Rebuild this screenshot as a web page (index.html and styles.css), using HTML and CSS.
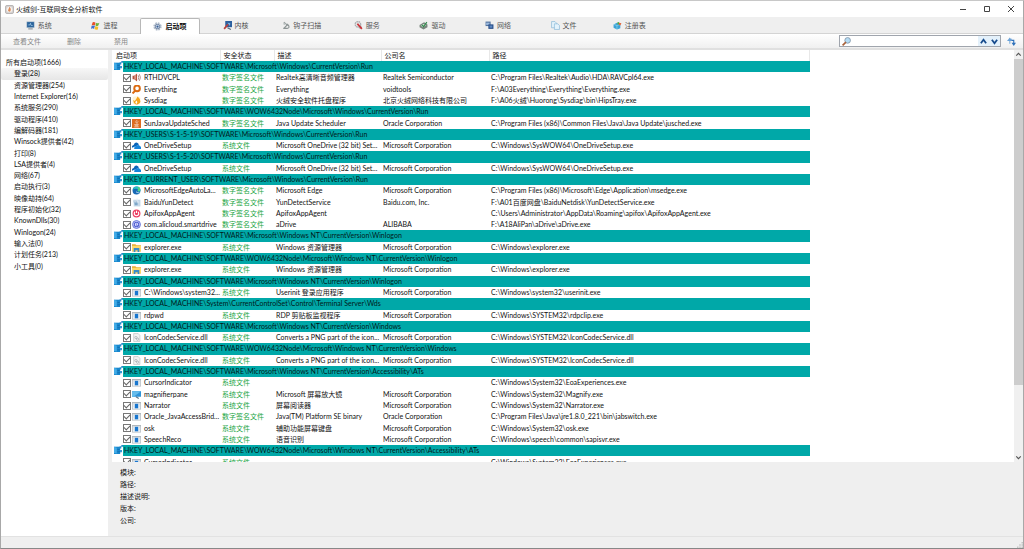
FILE: index.html
```html
<!DOCTYPE html>
<html lang="zh-CN">
<head>
    <meta charset="UTF-8">
    <meta name="viewport" content="width=device-width, initial-scale=1.0">
    <title>火绒剑-互联网安全分析软件</title>
    <link rel="stylesheet" href="styles.css">
</head>
<body>
    <svg class="sprite" aria-hidden="true">
        <symbol id="i-system" viewBox="0 0 16 16"><rect x="1" y="1" width="14" height="11" fill="#8fa9c0"/><rect x="2" y="2" width="12" height="9" fill="#2d659c"/><path d="M4 7h3l1-3 1 4h3" stroke="#bfe4ff" fill="none"/><path d="M4 14h8" stroke="#8b949c" stroke-width="2"/></symbol>
        <symbol id="i-process" viewBox="0 0 16 16"><path d="M3 2q3-1 5 1L7 8Q4 6 1 8z" fill="#e8502a"/><path d="M9 3q3 2 6 0l-2 5q-3 2-5 0z" fill="#6db33a"/><path d="M1 9q3-2 6 0l-2 5q-2-2-5 0z" fill="#3f6fd0"/><path d="M8 9q3 2 5 1l-1 5q-3 1-6-1z" fill="#f6bd27"/></symbol>
        <symbol id="i-gear" viewBox="0 0 16 16"><circle cx="8" cy="8" r="6" fill="none" stroke="#b4bfcd" stroke-width="3" stroke-dasharray="3 1.7"/><circle cx="8" cy="8" r="4" fill="#dfe9f5" stroke="#7d90ac" stroke-width="2"/><circle cx="8" cy="8" r="2" fill="#345c94"/></symbol>
        <symbol id="i-kernel" viewBox="0 0 16 16"><rect x="4" y="0" width="12" height="11" fill="#2b5f9e"/><path d="M8 3l5 1-1 5" fill="#7db1e0"/><path d="M2 14l7-8" stroke="#b8413b" stroke-width="3"/><path d="M8 12l6 3" stroke="#576779" stroke-width="2"/></symbol>
        <symbol id="i-hook" viewBox="0 0 16 16"><path d="M5 2l6 5-6 6M4 13h7q4 0 3-4l-3-4" fill="none" stroke="#8c9494" stroke-width="2"/><circle cx="6" cy="5" r="2" fill="#b9c0c0"/></symbol>
        <symbol id="i-service" viewBox="0 0 16 16"><circle cx="7" cy="6" r="5" fill="#e3e3e3" stroke="#a5a9ad" stroke-width="2" stroke-dasharray="3 1"/><circle cx="11" cy="11" r="3" fill="#bcbcbc"/><path d="M6 5l8 9" stroke="#cb3036" stroke-width="3"/></symbol>
        <symbol id="i-driver" viewBox="0 0 16 16"><path d="M1 7l8-5 6 4v5l-7 4-7-4z" fill="#77847c"/><path d="M3 8l6-3 4 2-6 4z" fill="#d8e2da"/><path d="M5 7l3 3 6-8" fill="none" stroke="#2e8a4a" stroke-width="2"/></symbol>
        <symbol id="i-network" viewBox="0 0 16 16"><rect x="1" y="1" width="9" height="8" fill="#54749f"/><rect x="2" y="3" width="6" height="4" fill="#9cbade"/><rect x="6" y="6" width="9" height="8" fill="#294f89"/><rect x="8" y="8" width="5" height="4" fill="#5d88c2"/></symbol>
        <symbol id="i-file" viewBox="0 0 16 16"><path d="M1 1h6l3 3v8H1z" fill="#e4f3fc" stroke="#72abd0"/><path d="M6 5h6l3 3v7H6z" fill="#e4f3fc" stroke="#72abd0"/></symbol>
        <symbol id="i-registry" viewBox="0 0 16 16"><path d="M1 6l6-3 6 3v7l-6 2-6-3z" fill="#3ca3d5"/><path d="M7 8v7M1 6l6 2 6-2" stroke="#a7e2f7" fill="none"/><path d="M8 2h3v4H8z" fill="#50a93f"/><path d="M11 3l4 1-2 4-3-2z" fill="#e5663b"/></symbol>
        <symbol id="i-group" viewBox="0 0 16 16"><path d="M0 3h11v13H0z" fill="#1787cd"/><path d="M0 3l5 2v10l-5-1z" fill="#43abe6"/><path d="M6 8h4M6 12h5" stroke="#0c5fa0"/><path d="M11 9h3v4h-3z" fill="#1787cd"/><path d="M10 2h3v4h-3zM13 0h3v3h-3z" fill="#258ac9"/></symbol>
        <symbol id="i-sound" viewBox="0 0 16 16"><path d="M1 5h3l5-4v14l-5-4H1z" fill="#b5523c"/><path d="M4 5l3-2v9l-3-2z" fill="#d9998a"/><path d="M11 4q2 4 0 8M13 2q4 6 0 12" fill="none" stroke="#a87d74" stroke-width="1.5"/></symbol>
        <symbol id="i-search" viewBox="0 0 16 16"><circle cx="9" cy="6" r="5" fill="none" stroke="#dc6b12" stroke-width="3.500"/><path d="M6 10l-5 5" stroke="#dc6b12" stroke-width="3.500"/></symbol>
        <symbol id="i-huorong" viewBox="0 0 16 16"><rect x="1" y="1" width="14" height="14" rx="3" fill="#fff3d8"/><path d="M10 1q5 4 5 9-2 5-8 5-5-3-5-8l3 2q3-4 5-8z" fill="#f7a51b"/><path d="M8 8q3 3 0 6-4-2 0-6z" fill="#fff"/></symbol>
        <symbol id="i-java" viewBox="0 0 16 16"><rect width="16" height="16" fill="#dd6c20"/><path d="M9 2q-4 3-1 6M11 4q-3 2-1 4M4 10h8M5 12h6M4 14h8" stroke="#fff" fill="none"/></symbol>
        <symbol id="i-onedrive" viewBox="0 0 16 16"><path d="M0 12q-1-4 3-5 2-5 6-4 3 1 3 4z" fill="#0a64b8"/><path d="M4 14q-1-5 5-6 3-2 5 1 3 1 2 5z" fill="#1685db"/></symbol>
        <symbol id="i-edge" viewBox="0 0 16 16"><circle cx="8" cy="8" r="7" fill="#1769b5"/><path d="M1 7q2-6 8-6 6 1 6 7-2 3-5 1 2-4-3-4-4 0-6 2z" fill="#2bc0c2"/><path d="M10 9q2 2 5-1 0-5-4-7 0 4-1 8z" fill="#55cf80"/><path d="M7 9q0 4 5 4l2-1q-1-1-5-1z" fill="#d8edfb"/></symbol>
        <symbol id="i-baidu" viewBox="0 0 16 16"><rect x="3" y="3" width="12" height="12" fill="#c5d8e8"/><path d="M3 2v6h4V5h3v8H5z" fill="#7ea7ca"/><path d="M9 1v6h3" stroke="#e5edf4" stroke-width="2" fill="none"/></symbol>
        <symbol id="i-apifox" viewBox="0 0 16 16"><circle cx="8" cy="8" r="7" fill="#ed3e60"/><path d="M5 5q-3 6 3 7 6-1 3-7M8 3v4" fill="none" stroke="#fff" stroke-width="2"/></symbol>
        <symbol id="i-drive" viewBox="0 0 16 16"><circle cx="8" cy="8" r="7" fill="#d8dbff" stroke="#5261d2" stroke-width="1.5"/><circle cx="8" cy="8" r="4" fill="none" stroke="#5261d2" stroke-width="2"/><path d="M8 6v4h4" stroke="#5261d2" fill="none"/></symbol>
        <symbol id="i-folder" viewBox="0 0 16 16"><path d="M0 2h6l2 2h8v11H0z" fill="#e7ad33"/><path d="M0 5h16v9H0z" fill="#ffd868"/><path d="M3 9h10v7h-3v-3H6v3H3z" fill="#3a8bc9"/></symbol>
        <symbol id="i-exe" viewBox="0 0 16 16"><rect y="2" width="16" height="13" fill="#a7adb2"/><rect x="1" y="4" width="14" height="10" fill="#edf2f6"/><rect x="5" y="5" width="6" height="8" fill="#1976ce"/><path d="M2 6h2M2 9h2M12 6h2M12 9h2" stroke="#c3cbd2"/></symbol>
        <symbol id="i-dll" viewBox="0 0 16 16"><path d="M3 1h8l3 3v11H3z" fill="#f3f3f3" stroke="#b5b5b5"/><circle cx="7" cy="8" r="2" fill="none" stroke="#929ba1"/><circle cx="10" cy="11" r="2" fill="none" stroke="#929ba1"/></symbol>
        <symbol id="i-magnify" viewBox="0 0 16 16"><path d="M0 2h16v10H0z" fill="#2d93d8"/><path d="M0 2h16L3 12H0z" fill="#66bceb"/><path d="M7 12l5 3" stroke="#5a7184" stroke-width="2"/></symbol>
        <symbol id="i-lens" viewBox="0 0 16 16"><circle cx="10" cy="6" r="5" fill="#b5dcf4" stroke="#8396a8" stroke-width="1.5"/><path d="M7 9l-6 6" stroke="#a7613a" stroke-width="3"/></symbol>
        <symbol id="i-refresh" viewBox="0 0 16 16"><path d="M5 12V4h4" fill="none" stroke="#7fb0dd" stroke-width="2"/><path d="M0 7l5-6 4 6z" fill="#6aa2d8"/><path d="M8 6h4v7" fill="none" stroke="#2f72bb" stroke-width="2"/><path d="M8 10h8l-4 6z" fill="#2f72bb"/></symbol>
        <symbol id="i-logo" viewBox="0 0 16 16"><rect x="1" y="1" width="14" height="14" rx="2" fill="#d8d5d4" stroke="#8d8787"/><circle cx="8" cy="8" r="5" fill="#f7f2ee"/><path d="M8 3q4 4 1 9-5-1-3-4z" fill="#dc8b58"/></symbol>
    </svg>

    <div class="window">
        <header class="titlebar">
            <svg class="logo"><use href="#i-logo"/></svg>
            <h1 class="title">火绒剑-互联网安全分析软件</h1>
            <div class="window-buttons">
                <button class="win-btn" aria-label="最小化"><svg viewBox="0 0 8 8"><path d="M1 4.500h6"/></svg></button>
                <button class="win-btn" aria-label="最大化"><svg viewBox="0 0 8 8"><path d="M1.500 1.500h5v5h-5z"/></svg></button>
                <button class="win-btn" aria-label="关闭"><svg viewBox="0 0 8 8"><path d="M1 1l6 6M7 1L1 7"/></svg></button>
            </div>
        </header>

        <nav class="tabs">
            <div class="tab-list">
                <button class="tab"><svg class="icon"><use href="#i-system"/></svg>系统</button>
                <button class="tab"><svg class="icon"><use href="#i-process"/></svg>进程</button>
                <button class="tab active"><svg class="icon"><use href="#i-gear"/></svg>启动项</button>
                <button class="tab"><svg class="icon"><use href="#i-kernel"/></svg>内核</button>
                <button class="tab"><svg class="icon"><use href="#i-hook"/></svg>钩子扫描</button>
                <button class="tab"><svg class="icon"><use href="#i-service"/></svg>服务</button>
                <button class="tab"><svg class="icon"><use href="#i-driver"/></svg>驱动</button>
                <button class="tab"><svg class="icon"><use href="#i-network"/></svg>网络</button>
                <button class="tab"><svg class="icon"><use href="#i-file"/></svg>文件</button>
                <button class="tab"><svg class="icon"><use href="#i-registry"/></svg>注册表</button>
            </div>
        </nav>

        <div class="toolbar">
            <button class="tool">查看文件</button>
            <button class="tool">删除</button>
            <button class="tool">禁用</button>
            <div class="search">
                <svg class="icon"><use href="#i-lens"/></svg>
                <input type="text" class="search-input" aria-label="搜索">
                <button class="search-btn" aria-label="上一个"><svg viewBox="0 0 8 8"><path d="M1 6l3-4 3 4"/></svg></button>
                <button class="search-btn" aria-label="下一个"><svg viewBox="0 0 8 8"><path d="M1 2l3 4 3-4"/></svg></button>
            </div>
            <button class="refresh" aria-label="刷新"><svg class="icon"><use href="#i-refresh"/></svg></button>
        </div>

        <div class="content">
            <aside class="sidebar">
                <ul class="tree" id="tree"></ul>
            </aside>
            <main class="main">
                <div class="list">
                    <div class="list-view">
                        <table class="items">
                            <colgroup>
                                <col class="col-name"><col class="col-state"><col class="col-desc"><col class="col-company"><col class="col-path">
                            </colgroup>
                            <thead>
                                <tr><th>启动项</th><th>安全状态</th><th>描述</th><th>公司名</th><th>路径</th></tr>
                            </thead>
                            <tbody id="rows"></tbody>
                        </table>
                    </div>
                    <div class="scrollbar">
                        <button class="scroll-btn" aria-label="向上"><svg viewBox="0 0 8 8"><path d="M2 5l2-2 2 2"/></svg></button>
                        <div class="thumb"></div>
                        <button class="scroll-btn" aria-label="向下"><svg viewBox="0 0 8 8"><path d="M2 3l2 2 2-2"/></svg></button>
                    </div>
                </div>
                <dl class="details">
                    <dt>模块:</dt><dd></dd>
                    <dt>路径:</dt><dd></dd>
                    <dt>描述说明:</dt><dd></dd>
                    <dt>版本:</dt><dd></dd>
                    <dt>公司:</dt><dd></dd>
                </dl>
            </main>
        </div>
        <footer class="statusbar"><svg viewBox="0 0 8 8" class="grip"><path d="M6 0h2v2H6zM3 3h2v2H3zM6 3h2v2H6zM0 6h2v2H0zM3 6h2v2H3zM6 6h2v2H6z"/></svg></footer>
    </div>

    <script src="app.js"></script>
</body>
</html>
```
FILE: styles.css
```css
* {
    box-sizing: border-box;
}
body {
    margin: 0;
    font-family: Lato, "Noto Sans CJK SC", sans-serif;
    font-size: 7px;
    line-height: 11px;
    color: #111;
}
button {
    padding: 0;
    border: 0;
    background: none;
    font: inherit;
    color: inherit;
}
svg {
    display: block;
}
.sprite {
    position: absolute;
    width: 0;
    height: 0;
}
.icon {
    width: 9px;
    height: 9px;
    flex: none;
}
.window {
    display: flex;
    flex-direction: column;
    height: 100vh;
    border: 1px solid #a8a8a8;
    border-top-color: #c8c8c8;
    border-bottom-color: #888;
    background: #efefef;
}

/* Barra de título */
.titlebar {
    display: flex;
    align-items: center;
    height: 16px;
    padding-left: 4px;
    background: #fff;
}
.logo {
    width: 9px;
    height: 9px;
}
.title {
    margin: 0 0 0 2px;
    font-size: 7px;
    font-weight: normal;
}
.window-buttons {
    display: flex;
    margin-left: auto;
}
.win-btn {
    display: flex;
    justify-content: center;
    width: 24px;
}
.win-btn svg {
    width: 8px;
    height: 8px;
    fill: none;
    stroke: #444;
}

/* Pestañas */
.tabs {
    height: 17px;
    padding-left: 5px;
    border-bottom: 1px solid #d4d4d4;
}
.tab-list {
    display: grid;
    grid-template-columns: repeat(10, 1fr);
    width: 656px;
    height: 17px;
    padding-top: 1px;
}
.tab {
    display: flex;
    align-items: center;
    justify-content: center;
    gap: 3px;
    margin: 0 3px;
    padding-bottom: 1px;
    color: #555;
    white-space: nowrap;
}
.tab.active {
    border: 1px solid #b8b8b8;
    border-bottom: 0;
    border-radius: 2px 2px 0 0;
    background: #fff;
    color: #111;
    font-weight: bold;
}

/* Barra de herramientas */
.toolbar {
    display: flex;
    align-items: center;
    height: 16px;
    padding: 0 7px 0 12px;
    border-bottom: 2px solid #e0e0e0;
    background: linear-gradient(#fff, #f0f0f0);
}
.tool {
    margin-right: 26px;
    color: #888;
}
.tool + .tool {
    margin-right: 33px;
}
.search {
    display: flex;
    align-items: center;
    width: 162px;
    height: 12px;
    margin-left: auto;
    padding-left: 2px;
    border: 1px solid #a0a5ad;
    background: #fff;
}
.search-input {
    flex: 1;
    min-width: 0;
    height: 9px;
    padding: 0 2px;
    border: 0;
    outline: 0;
    font: inherit;
}
.search-btn {
    display: flex;
    align-items: center;
    justify-content: center;
    width: 11px;
    height: 10px;
    background: #e4f1fb;
}
.search-btn svg {
    width: 7px;
    height: 7px;
    fill: none;
    stroke: #154a8c;
    stroke-width: 2;
}
.refresh {
    margin-left: 6px;
}

.content {
    display: flex;
    flex: 1;
    min-height: 0;
}
.sidebar {
    width: 107px;
    flex: none;
    padding-top: 7px;
    background: #fff;
}
.tree {
    display: grid;
    grid-auto-rows: 1fr;
    height: 215px;
    margin: 0;
    padding: 0;
    list-style: none;
}
.tree li {
    padding-left: 13px;
    border-radius: 2px;
}
.tree .root {
    padding-left: 5px;
}
.tree .selected {
    background: linear-gradient(#f7f7f7, #e6e6e6);
}

.main {
    display: flex;
    flex-direction: column;
    flex: 1;
    min-width: 0;
    padding-left: 4px;
}
.list {
    display: flex;
    flex: 1;
    min-height: 0;
}
.list-view {
    flex: 1;
    overflow: hidden;
    padding-left: 1px;
    background: #fff;
}
.items {
    width: 697px;
    height: 418px;
    table-layout: fixed;
    border-collapse: collapse;
}
.col-name { width: 107px; }
.col-state { width: 54px; }
.col-desc { width: 107px; }
.col-company { width: 108px; }
.items th {
    height: 11px;
    padding: 0 0 0 3px;
    border-right: 1px solid #e8e8e8;
    font-weight: normal;
    text-align: left;
}
.items td {
    height: 11px;
    padding: 0 0 0 2px;
    white-space: nowrap;
}
.items .group {
    height: 1px;
    padding: 0 0 0 1px;
}
.group-box {
    display: flex;
    height: 100%;
    min-height: 11px;
}
.group-name {
    flex: 1;
    padding-left: 1px;
    background: #00a8a8;
    color: #001a1a;
}
.name-box {
    display: flex;
    align-items: center;
    padding-left: 8px;
}
.name-box label {
    margin-left: 3px;
}
.check {
    appearance: none;
    width: 8px;
    height: 8px;
    flex: none;
    margin: 0 1px 0 0;
    border: 1px solid #777;
    background: #fff;
}
.check:checked::before {
    content: "";
    display: block;
    width: 5px;
    height: 3px;
    border-left: 1px solid #666;
    border-bottom: 1px solid #666;
    transform: rotate(-45deg);
}
.items .state {
    color: #22a544;
}

.scrollbar {
    display: flex;
    flex-direction: column;
    justify-content: space-between;
    width: 9px;
    background: #f0f0f0;
}
.scroll-btn {
    height: 9px;
}
.scroll-btn svg {
    width: 9px;
    height: 9px;
    fill: none;
    stroke: #555;
}
.thumb {
    flex: 1;
    margin-bottom: 68px;
    background: #cdcdcd;
}

.details {
    display: grid;
    grid-template-columns: auto 1fr;
    grid-auto-rows: 12px;
    margin: 0;
    height: 74px;
    padding: 5px 0 0 8px;
}
.details dd {
    margin: 0;
}
.statusbar {
    display: flex;
    align-items: flex-end;
    justify-content: flex-end;
    height: 12px;
    border-top: 1px solid #e2e2e2;
}
.grip {
    width: 6px;
    height: 6px;
    fill: #c4c4c4;
}
```
FILE: app.js
```js
const arbol = [
    '所有启动项(1666)', '登录(28)', '资源管理器(254)', 'Internet Explorer(16)', '系统服务(290)',
    '驱动程序(410)', '编解码器(181)', 'Winsock提供者(42)', '打印(8)', 'LSA提供者(4)', '网络(67)',
    '启动执行(3)', '映像劫持(64)', '程序初始化(32)', 'KnownDlls(30)', 'Winlogon(24)', '输入法(0)',
    '计划任务(213)', '小工具(0)'
];

const S = '数字签名文件';
const W = '系统文件';
const MS = 'Microsoft Corporation';
const LM = 'HKEY_LOCAL_MACHINE\\SOFTWARE\\';

// Una cadena es un grupo; una lista es [icono, nombre, estado, descripción, compañía, ruta]
const filas = [
    LM + 'Microsoft\\Windows\\CurrentVersion\\Run',
    ['sound', 'RTHDVCPL', S, 'Realtek高清晰音频管理器', 'Realtek Semiconductor', 'C:\\Program Files\\Realtek\\Audio\\HDA\\RAVCpl64.exe'],
    ['search', 'Everything', S, 'Everything', 'voidtools', 'F:\\A03Everything\\Everything\\Everything.exe'],
    ['huorong', 'Sysdiag', S, '火绒安全软件托盘程序', '北京火绒网络科技有限公司', 'F:\\A06火绒\\Huorong\\Sysdiag\\bin\\HipsTray.exe'],
    LM + 'WOW6432Node\\Microsoft\\Windows\\CurrentVersion\\Run',
    ['java', 'SunJavaUpdateSched', S, 'Java Update Scheduler', 'Oracle Corporation', 'C:\\Program Files (x86)\\Common Files\\Java\\Java Update\\jusched.exe'],
    'HKEY_USERS\\S-1-5-19\\SOFTWARE\\Microsoft\\Windows\\CurrentVersion\\Run',
    ['onedrive', 'OneDriveSetup', W, 'Microsoft OneDrive (32 bit) Set...', MS, 'C:\\Windows\\SysWOW64\\OneDriveSetup.exe'],
    'HKEY_USERS\\S-1-5-20\\SOFTWARE\\Microsoft\\Windows\\CurrentVersion\\Run',
    ['onedrive', 'OneDriveSetup', W, 'Microsoft OneDrive (32 bit) Set...', MS, 'C:\\Windows\\SysWOW64\\OneDriveSetup.exe'],
    'HKEY_CURRENT_USER\\SOFTWARE\\Microsoft\\Windows\\CurrentVersion\\Run',
    ['edge', 'MicrosoftEdgeAutoLa...', S, 'Microsoft Edge', MS, 'C:\\Program Files (x86)\\Microsoft\\Edge\\Application\\msedge.exe'],
    ['baidu', 'BaiduYunDetect', S, 'YunDetectService', 'Baidu.com, Inc.', 'F:\\A01百度网盘\\BaiduNetdisk\\YunDetectService.exe'],
    ['apifox', 'ApifoxAppAgent', S, 'ApifoxAppAgent', '', 'C:\\Users\\Administrator\\AppData\\Roaming\\apifox\\ApifoxAppAgent.exe'],
    ['drive', 'com.alicloud.smartdrive', S, 'aDrive', 'ALIBABA', 'F:\\A18AliPan\\aDrive\\aDrive.exe'],
    LM + 'Microsoft\\Windows NT\\CurrentVersion\\Winlogon',
    ['folder', 'explorer.exe', W, 'Windows 资源管理器', MS, 'C:\\Windows\\explorer.exe'],
    LM + 'WOW6432Node\\Microsoft\\Windows NT\\CurrentVersion\\Winlogon',
    ['folder', 'explorer.exe', W, 'Windows 资源管理器', MS, 'C:\\Windows\\explorer.exe'],
    LM + 'Microsoft\\Windows NT\\CurrentVersion\\Winlogon',
    ['exe', 'C:\\Windows\\system32...', W, 'Userinit 登录应用程序', MS, 'C:\\Windows\\system32\\userinit.exe'],
    'HKEY_LOCAL_MACHINE\\System\\CurrentControlSet\\Control\\Terminal Server\\Wds',
    ['exe', 'rdpwd', W, 'RDP 剪贴板监视程序', MS, 'C:\\Windows\\SYSTEM32\\rdpclip.exe'],
    LM + 'Microsoft\\Windows NT\\CurrentVersion\\Windows',
    ['dll', 'IconCodecService.dll', W, 'Converts a PNG part of the icon...', MS, 'C:\\Windows\\SYSTEM32\\IconCodecService.dll'],
    LM + 'WOW6432Node\\Microsoft\\Windows NT\\CurrentVersion\\Windows',
    ['dll', 'IconCodecService.dll', W, 'Converts a PNG part of the icon...', MS, 'C:\\Windows\\SYSTEM32\\IconCodecService.dll'],
    LM + 'Microsoft\\Windows NT\\CurrentVersion\\Accessibility\\ATs',
    ['exe', 'CursorIndicator', W, '', '', 'C:\\Windows\\System32\\EoaExperiences.exe'],
    ['magnify', 'magnifierpane', W, 'Microsoft 屏幕放大镜', MS, 'C:\\Windows\\System32\\Magnify.exe'],
    ['exe', 'Narrator', W, '屏幕阅读器', MS, 'C:\\Windows\\System32\\Narrator.exe'],
    ['exe', 'Oracle_JavaAccessBrid...', S, 'Java(TM) Platform SE binary', 'Oracle Corporation', 'C:\\Program Files\\Java\\jre1.8.0_221\\bin\\jabswitch.exe'],
    ['exe', 'osk', W, '辅助功能屏幕键盘', MS, 'C:\\Windows\\System32\\osk.exe'],
    ['exe', 'SpeechReco', W, '语音识别', MS, 'C:\\Windows\\speech\\common\\sapisvr.exe'],
    LM + 'WOW6432Node\\Microsoft\\Windows NT\\CurrentVersion\\Accessibility\\ATs',
    ['exe', 'CursorIndicator', W, '', '', 'C:\\Windows\\System32\\EoaExperiences.exe']
];

function icono(nombre) {
    return `<svg class="icon"><use href="#i-${nombre}"/></svg>`;
}

document.getElementById('tree').innerHTML = arbol.map((texto, i) => {
    const clase = i === 0 ? 'root' : (i === 1 ? 'selected' : '');
    return `<li class="${clase}">${texto}</li>`;
}).join('');

document.getElementById('rows').innerHTML = filas.map((fila, i) => {
    if (typeof fila === 'string') {
        return `<tr><td class="group" colspan="5"><div class="group-box">${icono('group')}<span class="group-name">${fila}</span></div></td></tr>`;
    }
    const [ico, nombre, estado, desc, empresa, ruta] = fila;
    return `<tr>
        <td><div class="name-box"><input type="checkbox" class="check" id="c${i}" checked>${icono(ico)}<label for="c${i}">${nombre}</label></div></td>
        <td class="state">${estado}</td><td>${desc}</td><td>${empresa}</td><td>${ruta}</td>
    </tr>`;
}).join('');
```
